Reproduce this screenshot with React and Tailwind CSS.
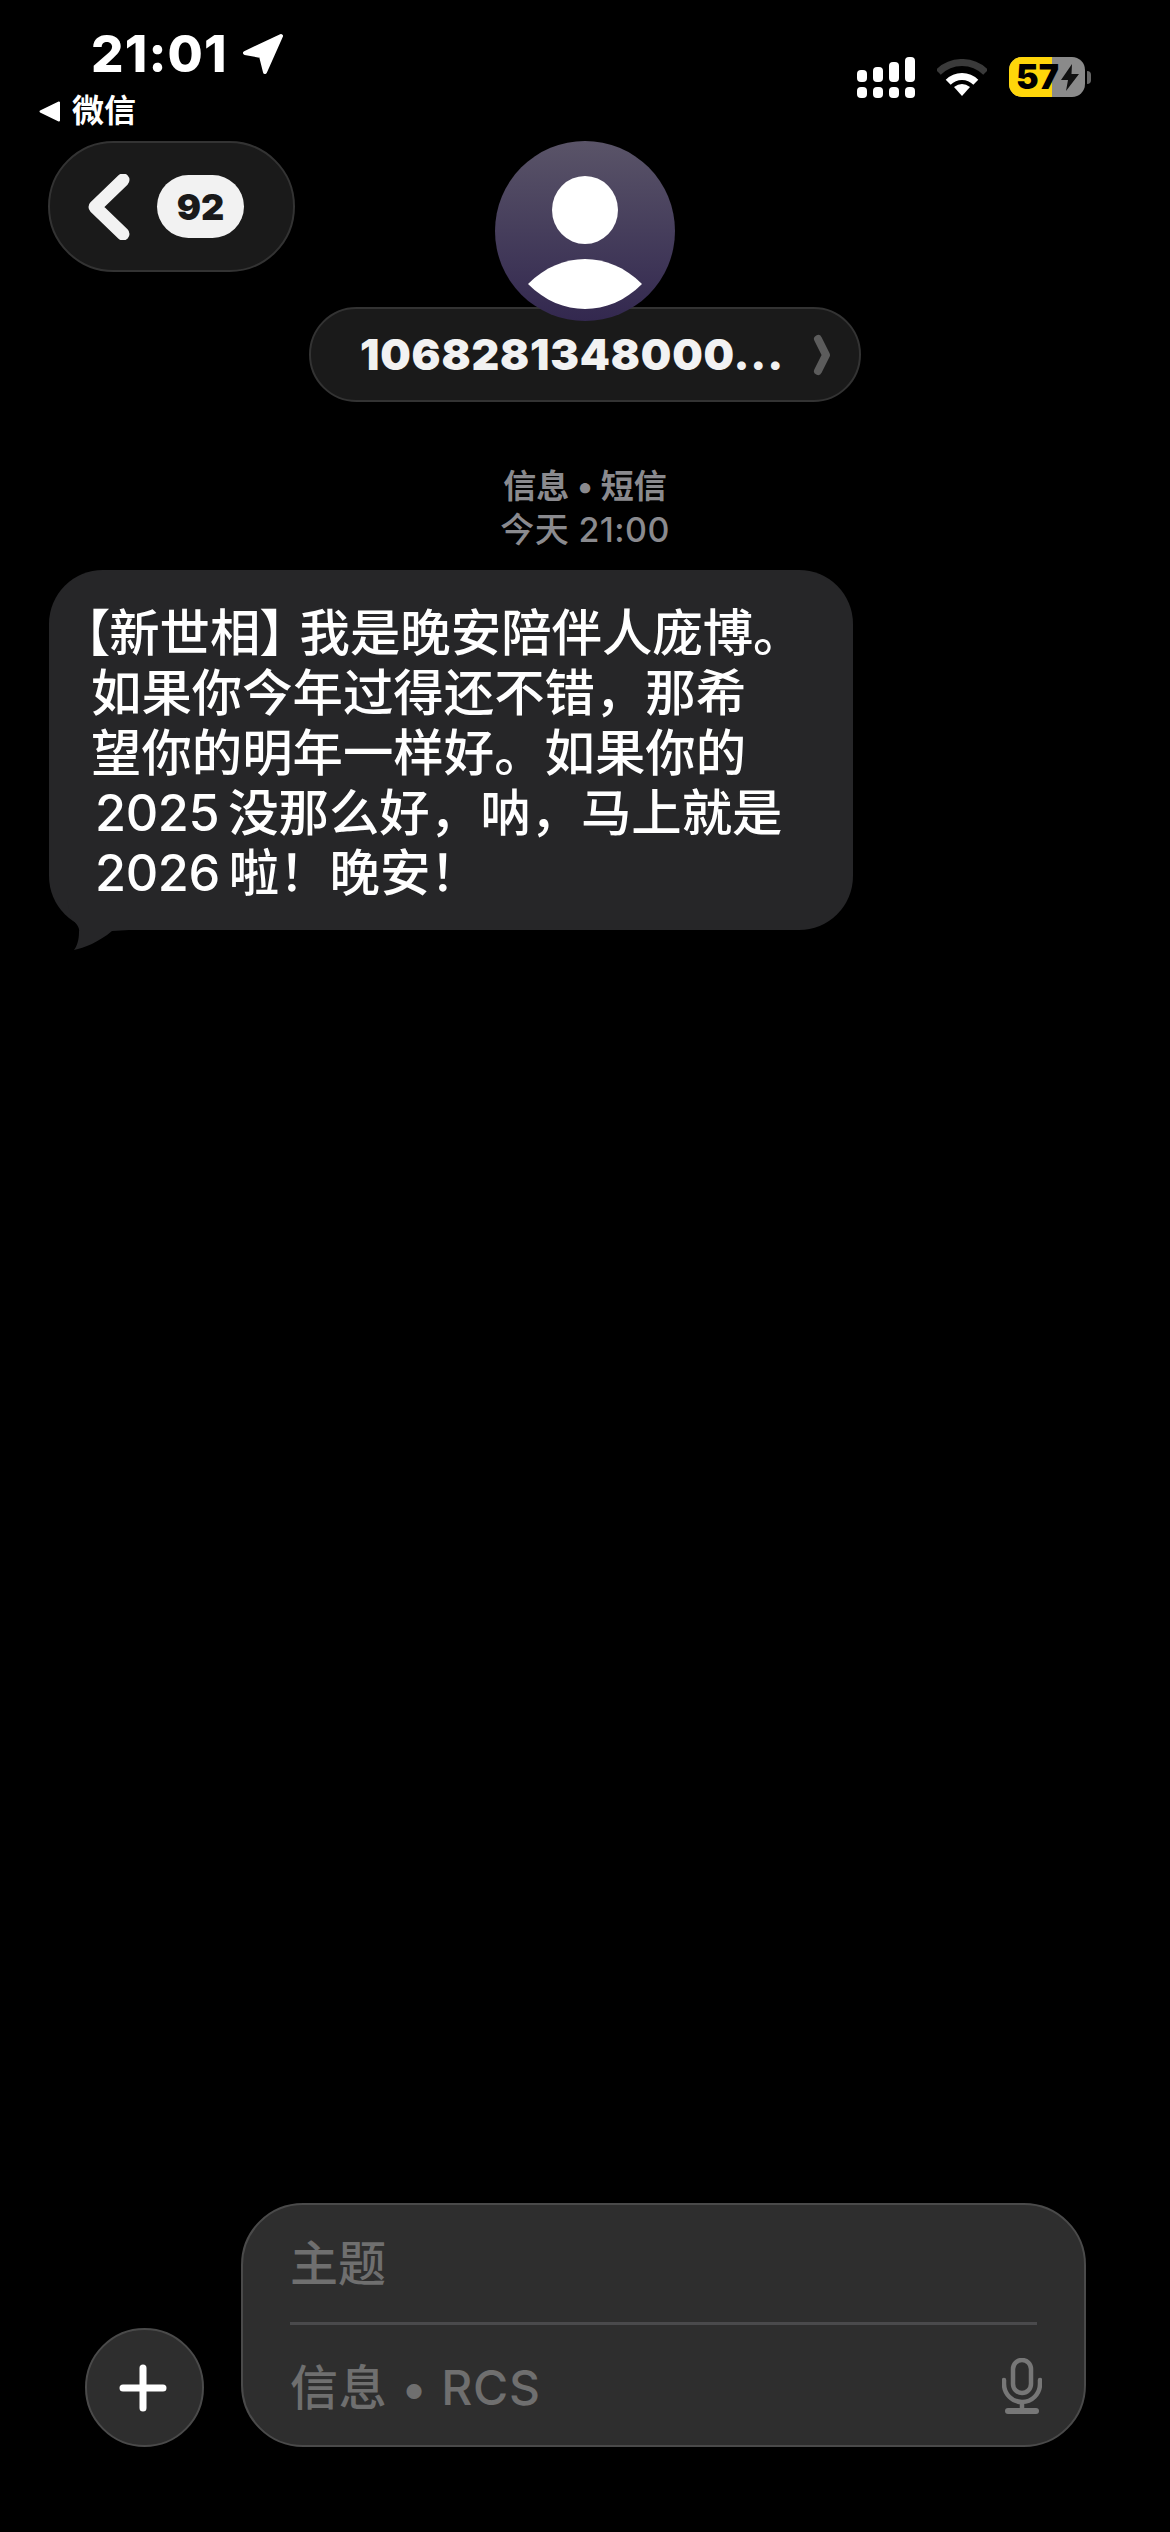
const messageLines = [
  { text: "如果你今年过得还不错，那希", className: "" },
  { text: "望你的明年一样好。如果你的", className: "" },
  { digits: "2025", text: "没那么好，呐，马上就是", className: "ml-[4px]" },
  { digits: "2026", text: "啦！晚安！", className: "ml-[4px]" },
];

const SignalIcon = () => (
  <svg width="58" height="41" viewBox="0 0 58 41" fill="#fff">
    <rect x="0" y="13" width="10" height="12" rx="4" />
    <rect x="16" y="10" width="10" height="15" rx="4" />
    <rect x="32" y="5" width="10" height="20" rx="4" />
    <rect x="48" y="0" width="10" height="25" rx="4" />
    <rect x="0" y="30" width="10" height="11" rx="4" />
    <rect x="16" y="30" width="10" height="11" rx="4" />
    <rect x="32" y="30" width="10" height="11" rx="4" />
    <rect x="48" y="30" width="10" height="11" rx="4" />
  </svg>
);

const WifiIcon = () => (
  <svg width="50" height="37" viewBox="0 0 50 37" fill="none">
    <path d="M1.3 13.3A33.5 33.5 0 0 1 48.7 13.3" stroke="#3a3a3a" strokeWidth="7" />
    <path d="M11.2 23.2A19.5 19.5 0 0 1 38.8 23.2" stroke="#fff" strokeWidth="7" />
    <path d="M25 37L17 28Q25 22 33 28Z" fill="#fff" />
  </svg>
);

const BatteryIcon = () => (
  <div className="flex items-center gap-[2px]">
    <div className="relative flex h-[40px] w-[76px] overflow-hidden rounded-[13px] bg-[#8a8a8a]">
      <div className="h-full w-[43px] bg-[#ffd60a]" />
      <span className="absolute left-[7px] top-0 text-[34px] leading-[40px] font-black text-black">57</span>
      <svg className="absolute left-[52px] top-[7px]" width="18" height="27" viewBox="0 0 18 27" fill="#111">
        <path d="M11 0L0 16H7L5 27L18 10H10.5Z" />
      </svg>
    </div>
    <div className="h-[13px] w-[4px] rounded-r-full bg-[#666]" />
  </div>
);

const MicIcon = () => (
  <svg width="40" height="56" viewBox="0 0 40 56" fill="none" stroke="#777" strokeWidth="4.5">
    <rect x="11" y="2" width="18" height="33" rx="9" />
    <path d="M2 22V26A18 18 0 0 0 38 26V22" strokeLinecap="round" />
    <path d="M20 44V52" />
    <path d="M6 53H34" strokeWidth="6" strokeLinecap="round" />
  </svg>
);

export default function App() {
  return (
    <div
      lang="zh-CN"
      className="flex h-[2532px] w-[1170px] flex-col overflow-hidden bg-black font-['Inter','Noto_Sans_CJK_SC',sans-serif] text-white"
    >
      {/* Status bar */}
      <div className="flex h-[141px] justify-between">
        <div className="pl-[39px] pt-[27px]">
          <div className="flex items-center pl-[52px]">
            <span className="text-[51px] leading-[54px] font-extrabold tracking-[1.2px]">21:01</span>
            <svg className="ml-[14px]" width="42" height="42" viewBox="0 0 42 42" fill="#fff" stroke="#fff" strokeWidth="4" strokeLinejoin="round">
              <path d="M39 3L3 20L19 23L23 39Z" />
            </svg>
          </div>
          <div className="mt-[12px] flex items-center gap-[12px]">
            <svg width="21" height="21" viewBox="0 0 21 21" fill="#fff" stroke="#fff" strokeWidth="2" strokeLinejoin="round">
              <path d="M1.5 10.5L20 1.5V19.5Z" />
            </svg>
            <span className="text-[32px] leading-[36px] font-bold">微信</span>
          </div>
        </div>
        <div className="flex items-start pr-[79px] pt-[57px]">
          <SignalIcon />
          <div className="ml-[22px] mr-[22px] pt-[2px]">
            <WifiIcon />
          </div>
          <BatteryIcon />
        </div>
      </div>

      {/* Header */}
      <div className="grid grid-cols-[1fr_552px_1fr]">
        <div className="pl-[48px]">
          <div className="flex h-[131px] w-[247px] items-center rounded-full border-2 border-[#333] bg-[#1a1a1a] pl-[38px]">
            <svg width="42" height="66" viewBox="0 0 42 66" fill="none" stroke="#f2f2f2" strokeWidth="13" strokeLinecap="round" strokeLinejoin="round">
              <path d="M35 6L7 33L35 60" />
            </svg>
            <div className="ml-[27px] flex h-[63px] w-[87px] items-center justify-center rounded-full bg-[#f2f2f2] text-[36px] font-black text-[#1a1a1a]">
              92
            </div>
          </div>
        </div>
        <div className="flex flex-col items-center">
          <div className="relative z-10 mb-[-14px] flex h-[180px] w-[180px] flex-col items-center overflow-hidden rounded-full bg-gradient-to-b from-[#5a5468] to-[#33284f]">
            <svg width="180" height="180" viewBox="0 0 180 180" fill="#fff">
              <ellipse cx="90" cy="69" rx="33" ry="34" />
              <path d="M33 143C50 126 70 118 90 118C110 118 130 126 147 143C130 160 110 168 90 168C70 168 50 160 33 143Z" />
            </svg>
          </div>
          <div className="flex h-[95px] w-[552px] items-center rounded-full border-2 border-[#333] bg-[#1a1a1a] pl-[49px]">
            <span className="text-[43px] font-black tracking-[0.8px] text-[#f2f2f2]">1068281348000...</span>
            <svg className="ml-auto mr-[28px]" width="18" height="42" viewBox="0 0 18 42" fill="none" stroke="#5c5c5c" strokeWidth="8" strokeLinecap="round" strokeLinejoin="round">
              <path d="M5 5L13 21L5 37" />
            </svg>
          </div>
        </div>
        <div />
      </div>

      {/* Timestamp */}
      <div className="mt-[63px] flex flex-col items-center text-[#8a8a8e]">
        <span className="text-[33px] leading-[43px] font-bold">信息 • 短信</span>
        <span className="text-[34px] leading-[43px] font-medium tracking-[0.4px]">今天 21:00</span>
      </div>

      {/* Message bubble */}
      <div className="relative ml-[49px] mt-[19px] h-[360px] w-[804px] rounded-[54px] bg-[#262628] pl-[42px] pt-[33px] text-[50.4px] leading-[60px] font-medium">
        <div className="ml-[-7px] flex whitespace-nowrap">
          <span className="mr-[14px] [font-feature-settings:'palt']">【新世相】</span>
          <span>我是晚安陪伴人庞博。</span>
        </div>
        {messageLines.map((line) => (
          <div key={line.text} className={`whitespace-nowrap ${line.className}`}>
            {line.digits && <span className="mr-[9px] tracking-[-0.4px]">{line.digits}</span>}
            {line.text}
          </div>
        ))}
        <svg className="absolute left-0 top-[330px]" width="80" height="50" viewBox="0 0 80 50" fill="#262628">
          <path d="M18 0L22 18C28 24 31 28 30 32C30 40 28 46 25 50C35 48 50 42 63 31L80 30V0Z" />
        </svg>
      </div>

      {/* Composer */}
      <div className="mt-auto flex items-end pb-[85px] pl-[85px]">
        <div className="flex h-[119px] w-[119px] items-center justify-center rounded-full border-2 border-[#4a4a4a] bg-[#2e2e2e]">
          <svg className="mr-[3px]" width="48" height="48" viewBox="0 0 48 48" stroke="#fff" strokeWidth="7" strokeLinecap="round">
            <path d="M24 4V44M4 24H44" />
          </svg>
        </div>
        <div className="ml-[37px] flex h-[244px] w-[845px] flex-col rounded-[62px] border-2 border-[#4a4a4a] bg-[#2e2e2e] pl-[47px] pr-[47px] text-[48px] text-[#6f6f6f]">
          <div className="flex h-[120px] items-center border-b-[3px] border-[#4a4a4c] font-medium">主题</div>
          <div className="flex flex-1 items-center justify-between font-medium">
            <span className="pt-[5px] tracking-[0.8px]">信息 • RCS</span>
            <div className="mr-[-5px] pt-[2px]">
              <MicIcon />
            </div>
          </div>
        </div>
      </div>
    </div>
  );
}
